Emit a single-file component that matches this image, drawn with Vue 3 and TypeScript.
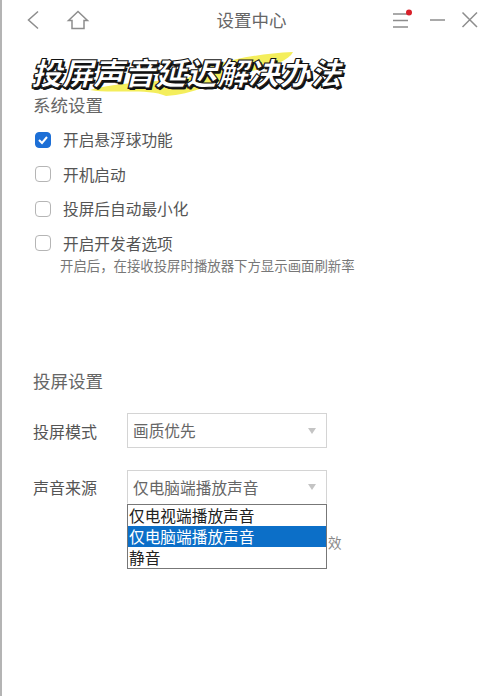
<script setup lang="ts">
const checks = [
  { label: '开启悬浮球功能', on: true },
  { label: '开机启动', on: false },
  { label: '投屏后自动最小化', on: false },
  { label: '开启开发者选项', on: false },
]
const options = ['仅电视端播放声音', '仅电脑端播放声音', '静音']
</script>

<template>
  <div class="page">
    <header class="topbar">
      <div class="nav-left">
        <svg class="ico" width="22" height="22" viewBox="0 0 22 22"><path d="M14 2.500 L4.500 11 L14 19.500" /></svg>
        <svg class="ico home" width="24" height="22" viewBox="0 0 24 22"><path d="M2.500 11.500 L12 2.500 L21.500 11.500 H18 V19.500 H6 V11.500 Z" /></svg>
      </div>
      <div class="caption">设置中心</div>
      <div class="nav-right">
        <svg class="ico" width="24" height="24" viewBox="0 0 24 24">
          <path d="M2 6 H17 M2 12.500 H17 M2 19 H17" />
          <circle class="dot" cx="18" cy="4.500" r="3" />
        </svg>
        <svg class="ico" width="18" height="20" viewBox="0 0 18 20"><path d="M1 10 H16" /></svg>
        <svg class="ico" width="18" height="18" viewBox="0 0 18 18"><path d="M1.500 1.500 L16 16 M16 1.500 L1.500 16" /></svg>
      </div>
    </header>

    <div class="headline">
      <svg class="swash" width="210" height="55" viewBox="0 0 210 55">
        <path d="M2 46 C30 38,70 38,100 34 C120 20,160 10,205 8 C200 18,180 24,150 30 C125 40,105 50,78 52 C60 44,20 50,2 46 Z" />
      </svg>
      <h1>投屏声音延迟解决办法</h1>
    </div>

    <h2 class="section first">系统设置</h2>
    <ul class="checks">
      <li v-for="c in checks" :key="c.label" class="check">
        <span class="box" :class="{ on: c.on }">
          <svg v-if="c.on" width="12" height="12" viewBox="0 0 12 12"><path d="M2 6 L5 9 L10 3" /></svg>
        </span>
        <span>{{ c.label }}</span>
      </li>
    </ul>
    <p class="note">开启后，在接收投屏时播放器下方显示画面刷新率</p>

    <h2 class="section second">投屏设置</h2>
    <div class="field">
      <span class="field-label">投屏模式</span>
      <div class="select"><span>画质优先</span><i class="caret"></i></div>
    </div>
    <div class="field sound">
      <span class="field-label">声音来源</span>
      <div class="select open">
        <span>仅电脑端播放声音</span><i class="caret"></i>
        <ul class="menu">
          <li v-for="(o, i) in options" :key="o" :class="{ active: i === 1 }">{{ o }}</li>
        </ul>
      </div>
    </div>
    <p class="behind">效</p>
  </div>
</template>

<style>
html, body { margin: 0; background: #fff; }
</style>

<style scoped>
.page {
  width: 500px;
  height: 696px;
  box-sizing: border-box;
  border-left: 2px solid #b4b4b4;
  background: #fff;
  overflow: hidden;
  font-family: "Noto Sans CJK SC", "Liberation Sans", sans-serif;
  color: #555;
}
.topbar {
  height: 44px;
  box-sizing: border-box;
  display: grid;
  grid-template-columns: 1fr auto 1fr;
  align-items: center;
  padding: 0 21px 5px 22px;
}
.nav-left, .nav-right { display: flex; align-items: center; }
.nav-left { gap: 20px; }
.nav-right { justify-content: flex-end; gap: 14px; }
.ico { fill: none; stroke: #8d8d8d; stroke-width: 1.500; flex: none; }
.ico .dot { fill: #d8202a; stroke: none; }
.caption { font-size: 17.500px; color: #666; }
.headline {
  position: relative;
  height: 46px;
  margin-left: 29px;
}
.headline h1 {
  position: relative;
  margin: 0;
  padding-top: 9px;
  font-size: 31px;
  line-height: 38px;
  font-weight: 900;
  font-style: italic;
  color: #fff;
  white-space: nowrap;
  -webkit-text-stroke: 1px #111;
  text-shadow: 2px 2px 0 #111, 1px 2px 0 #111, -1px 1px 0 #111;
}
.swash {
  position: absolute;
  left: 57px;
  top: 0;
  fill: #f4ee5c;
}
.section {
  margin: 0 0 0 31px;
  font-size: 17.500px;
  line-height: 26px;
  font-weight: 400;
  color: #666;
}
.first { margin-top: 2px; }
.second { margin-top: 93.500px; }
.checks { list-style: none; margin: 4.500px 0 0 33px; padding: 0; }
.check {
  height: 34.500px;
  display: flex;
  align-items: center;
  gap: 12px;
  font-size: 15.700px;
  color: #555;
}
.box {
  width: 16px;
  height: 16px;
  box-sizing: border-box;
  border: 1.500px solid #b5b5b5;
  border-radius: 4px;
  display: grid;
  place-items: center;
}
.box.on { background: #1d6fd6; border-color: #1d6fd6; }
.box svg { fill: none; stroke: #fff; stroke-width: 2; }
.note {
  margin: -6px 0 0 58px;
  font-size: 13.400px;
  line-height: 20px;
  color: #777;
  white-space: nowrap;
}
.field {
  display: flex;
  align-items: center;
  margin: 19px 0 0 31px;
}
.field.sound { margin-top: 22px; }
.field-label { width: 94px; font-size: 16px; color: #555; }
.select {
  position: relative;
  width: 200px;
  height: 35px;
  box-sizing: border-box;
  border: 1px solid #d4d4d4;
  display: flex;
  align-items: center;
  justify-content: space-between;
  padding: 0 10px 0 5px;
  font-size: 15.700px;
  color: #666;
}
.select.open { height: 34px; border-bottom-color: transparent; }
.caret {
  width: 0;
  height: 0;
  border-left: 4px solid transparent;
  border-right: 4px solid transparent;
  border-top: 6px solid #c4c4c4;
}
.menu {
  position: absolute;
  left: -1px;
  top: 33px;
  z-index: 2;
  width: 200px;
  box-sizing: border-box;
  margin: 0;
  padding: 0;
  list-style: none;
  background: #fff;
  border: 1px solid #777;
  font-size: 15.700px;
  color: #222;
}
.menu li { height: 21px; line-height: 21px; padding-left: 1px; white-space: nowrap; }
.menu .active { background: #0c6fc8; color: #fff; }
.behind {
  margin: 27px 0 0 326px;
  font-size: 13.500px;
  line-height: 22px;
  color: #888;
  white-space: nowrap;
}
</style>
